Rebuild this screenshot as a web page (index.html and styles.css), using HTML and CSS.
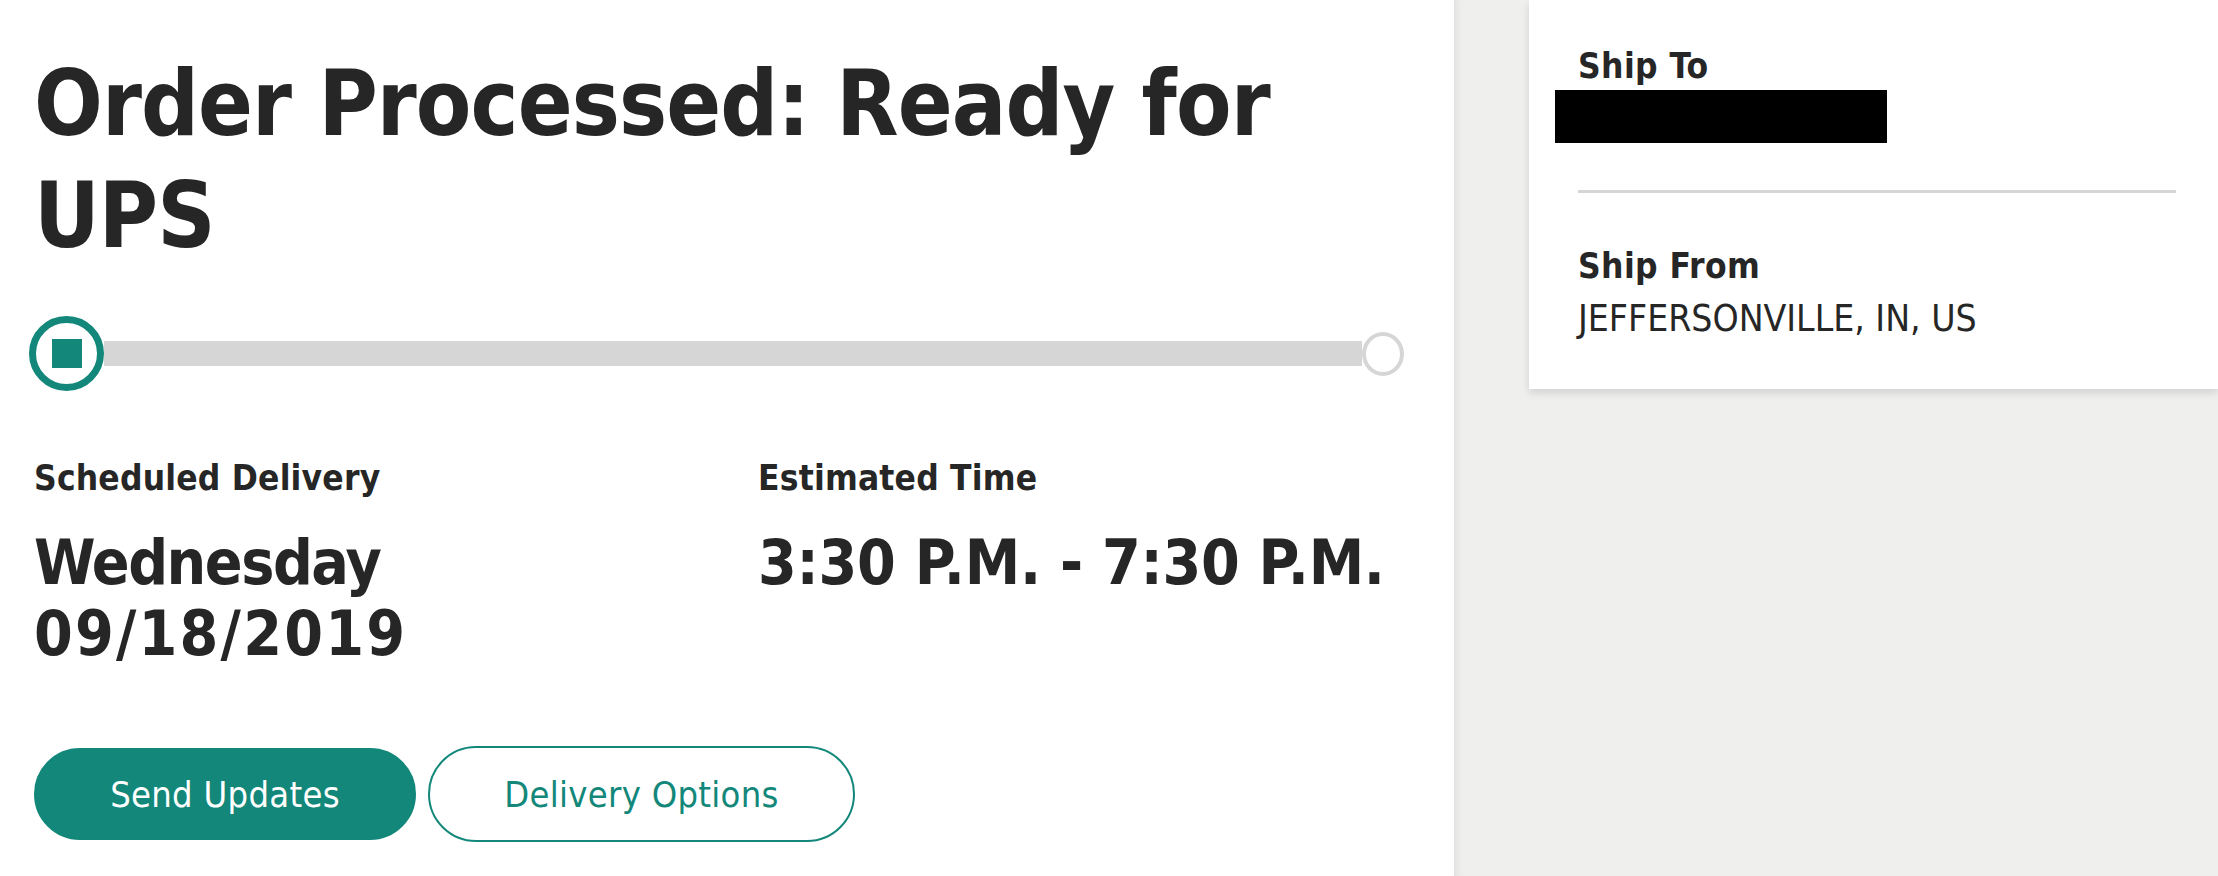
FILE: index.html
```html
<!DOCTYPE html>
<html lang="en">
<head>
    <meta charset="UTF-8">
    <meta name="viewport" content="width=device-width, initial-scale=1.0">
    <title>Order Status</title>
    <link rel="stylesheet" href="styles.css">
</head>
<body>

    <div class="main">
        <h1 class="status-title">Order Processed: Ready for UPS</h1>

        <div class="progress">
            <span class="step step-current"><span class="step-mark"></span></span>
            <span class="track"></span>
            <span class="step step-end"></span>
        </div>

        <div class="delivery">
            <div class="delivery-item">
                <h3 class="label">Scheduled Delivery</h3>
                <p class="value">Wednesday<br><span class="value-date">09/18/2019</span></p>
            </div>
            <div class="delivery-item">
                <h3 class="label">Estimated Time</h3>
                <p class="value value-time">3:30 P.M. - 7:30 P.M.</p>
            </div>
        </div>

        <div class="actions">
            <button class="btn btn-fill">Send Updates</button>
            <button class="btn btn-outline">Delivery Options</button>
        </div>
    </div>

    <div class="side">
        <div class="card">
            <h3 class="card-label">Ship To</h3>
            <div class="redacted"></div>
            <hr class="divider">
            <h3 class="card-label card-label-from">Ship From</h3>
            <p class="card-text">JEFFERSONVILLE, IN, US</p>
        </div>
    </div>

</body>
</html>
```

FILE: styles.css
```css
body {
    margin: 0;
    height: 876px;
    display: flex;
    overflow: hidden;
    font-family: "DejaVu Sans Condensed", "DejaVu Sans", sans-serif;
    font-stretch: condensed;
    color: #262626;
    background-color: #fff;
}

.main {
    width: 1454px;
    box-sizing: border-box;
    padding: 48px 50px 0 34px;
    background-color: #fff;
}

.status-title {
    margin: 0;
    font-size: 90px;
    line-height: 112px;
    font-weight: bold;
    letter-spacing: -0.9px;
}

/* progress */
.progress {
    display: flex;
    align-items: center;
    margin: 44px 0 0 -5px;
}

.step {
    display: flex;
    align-items: center;
    justify-content: center;
    box-sizing: border-box;
    border-radius: 50%;
    background-color: #fff;
    flex-shrink: 0;
}

.step-current {
    width: 75px;
    height: 75px;
    border: 7px solid #12877a;
}

.step-mark {
    width: 30px;
    height: 29px;
    background-color: #12877a;
}

.step-end {
    width: 42px;
    height: 44px;
    border: 4px solid #d6d6d6;
}

.track {
    flex: 1;
    height: 25px;
    background-color: #d6d6d6;
}

/* delivery info */
.delivery {
    display: grid;
    grid-template-columns: 724px 1fr;
    margin-top: 67px;
}

.label {
    margin: 0;
    font-size: 35px;
    line-height: 40px;
    font-weight: bold;
    letter-spacing: 0.2px;
}

.value {
    margin: 29px 0 0;
    font-size: 62px;
    line-height: 71px;
    font-weight: bold;
    letter-spacing: -1.5px;
}

.value-date {
    letter-spacing: 2.2px;
}

.value-time {
    letter-spacing: -0.3px;
}

.actions {
    display: flex;
    align-items: center;
    gap: 12px;
    margin-top: 77px;
}

.btn {
    box-sizing: border-box;
    border: 2px solid #12877a;
    border-radius: 48px;
    font-family: inherit;
    font-stretch: condensed;
    font-size: 36px;
    letter-spacing: 0.3px;
    cursor: pointer;
}

.btn-fill {
    width: 382px;
    height: 92px;
    background-color: #12877a;
    color: #fff;
}

.btn-outline {
    width: 427px;
    height: 96px;
    background-color: #fff;
    color: #12877a;
}

/* side panel */
.side {
    flex: 1;
    padding-left: 75px;
    background-color: #efefee;
    box-shadow: inset 10px 0 8px -8px rgba(0, 0, 0, 0.08);
}

.card {
    padding: 45px 42px 48px 49px;
    background-color: #fff;
    box-shadow: 0 4px 8px rgba(0, 0, 0, 0.12);
}

.card-label {
    margin: 0;
    font-size: 35px;
    line-height: 42px;
    font-weight: bold;
    letter-spacing: 0.4px;
}

.redacted {
    width: 332px;
    height: 53px;
    margin: 3px 0 0 -23px;
    background-color: #000;
}

.divider {
    height: 3px;
    margin: 47px 0 0;
    border: none;
    background-color: #d6d6d6;
}

.card-label-from {
    margin-top: 52px;
}

.card-text {
    margin: 10px 0 0;
    font-size: 37px;
    line-height: 44px;
}
```
